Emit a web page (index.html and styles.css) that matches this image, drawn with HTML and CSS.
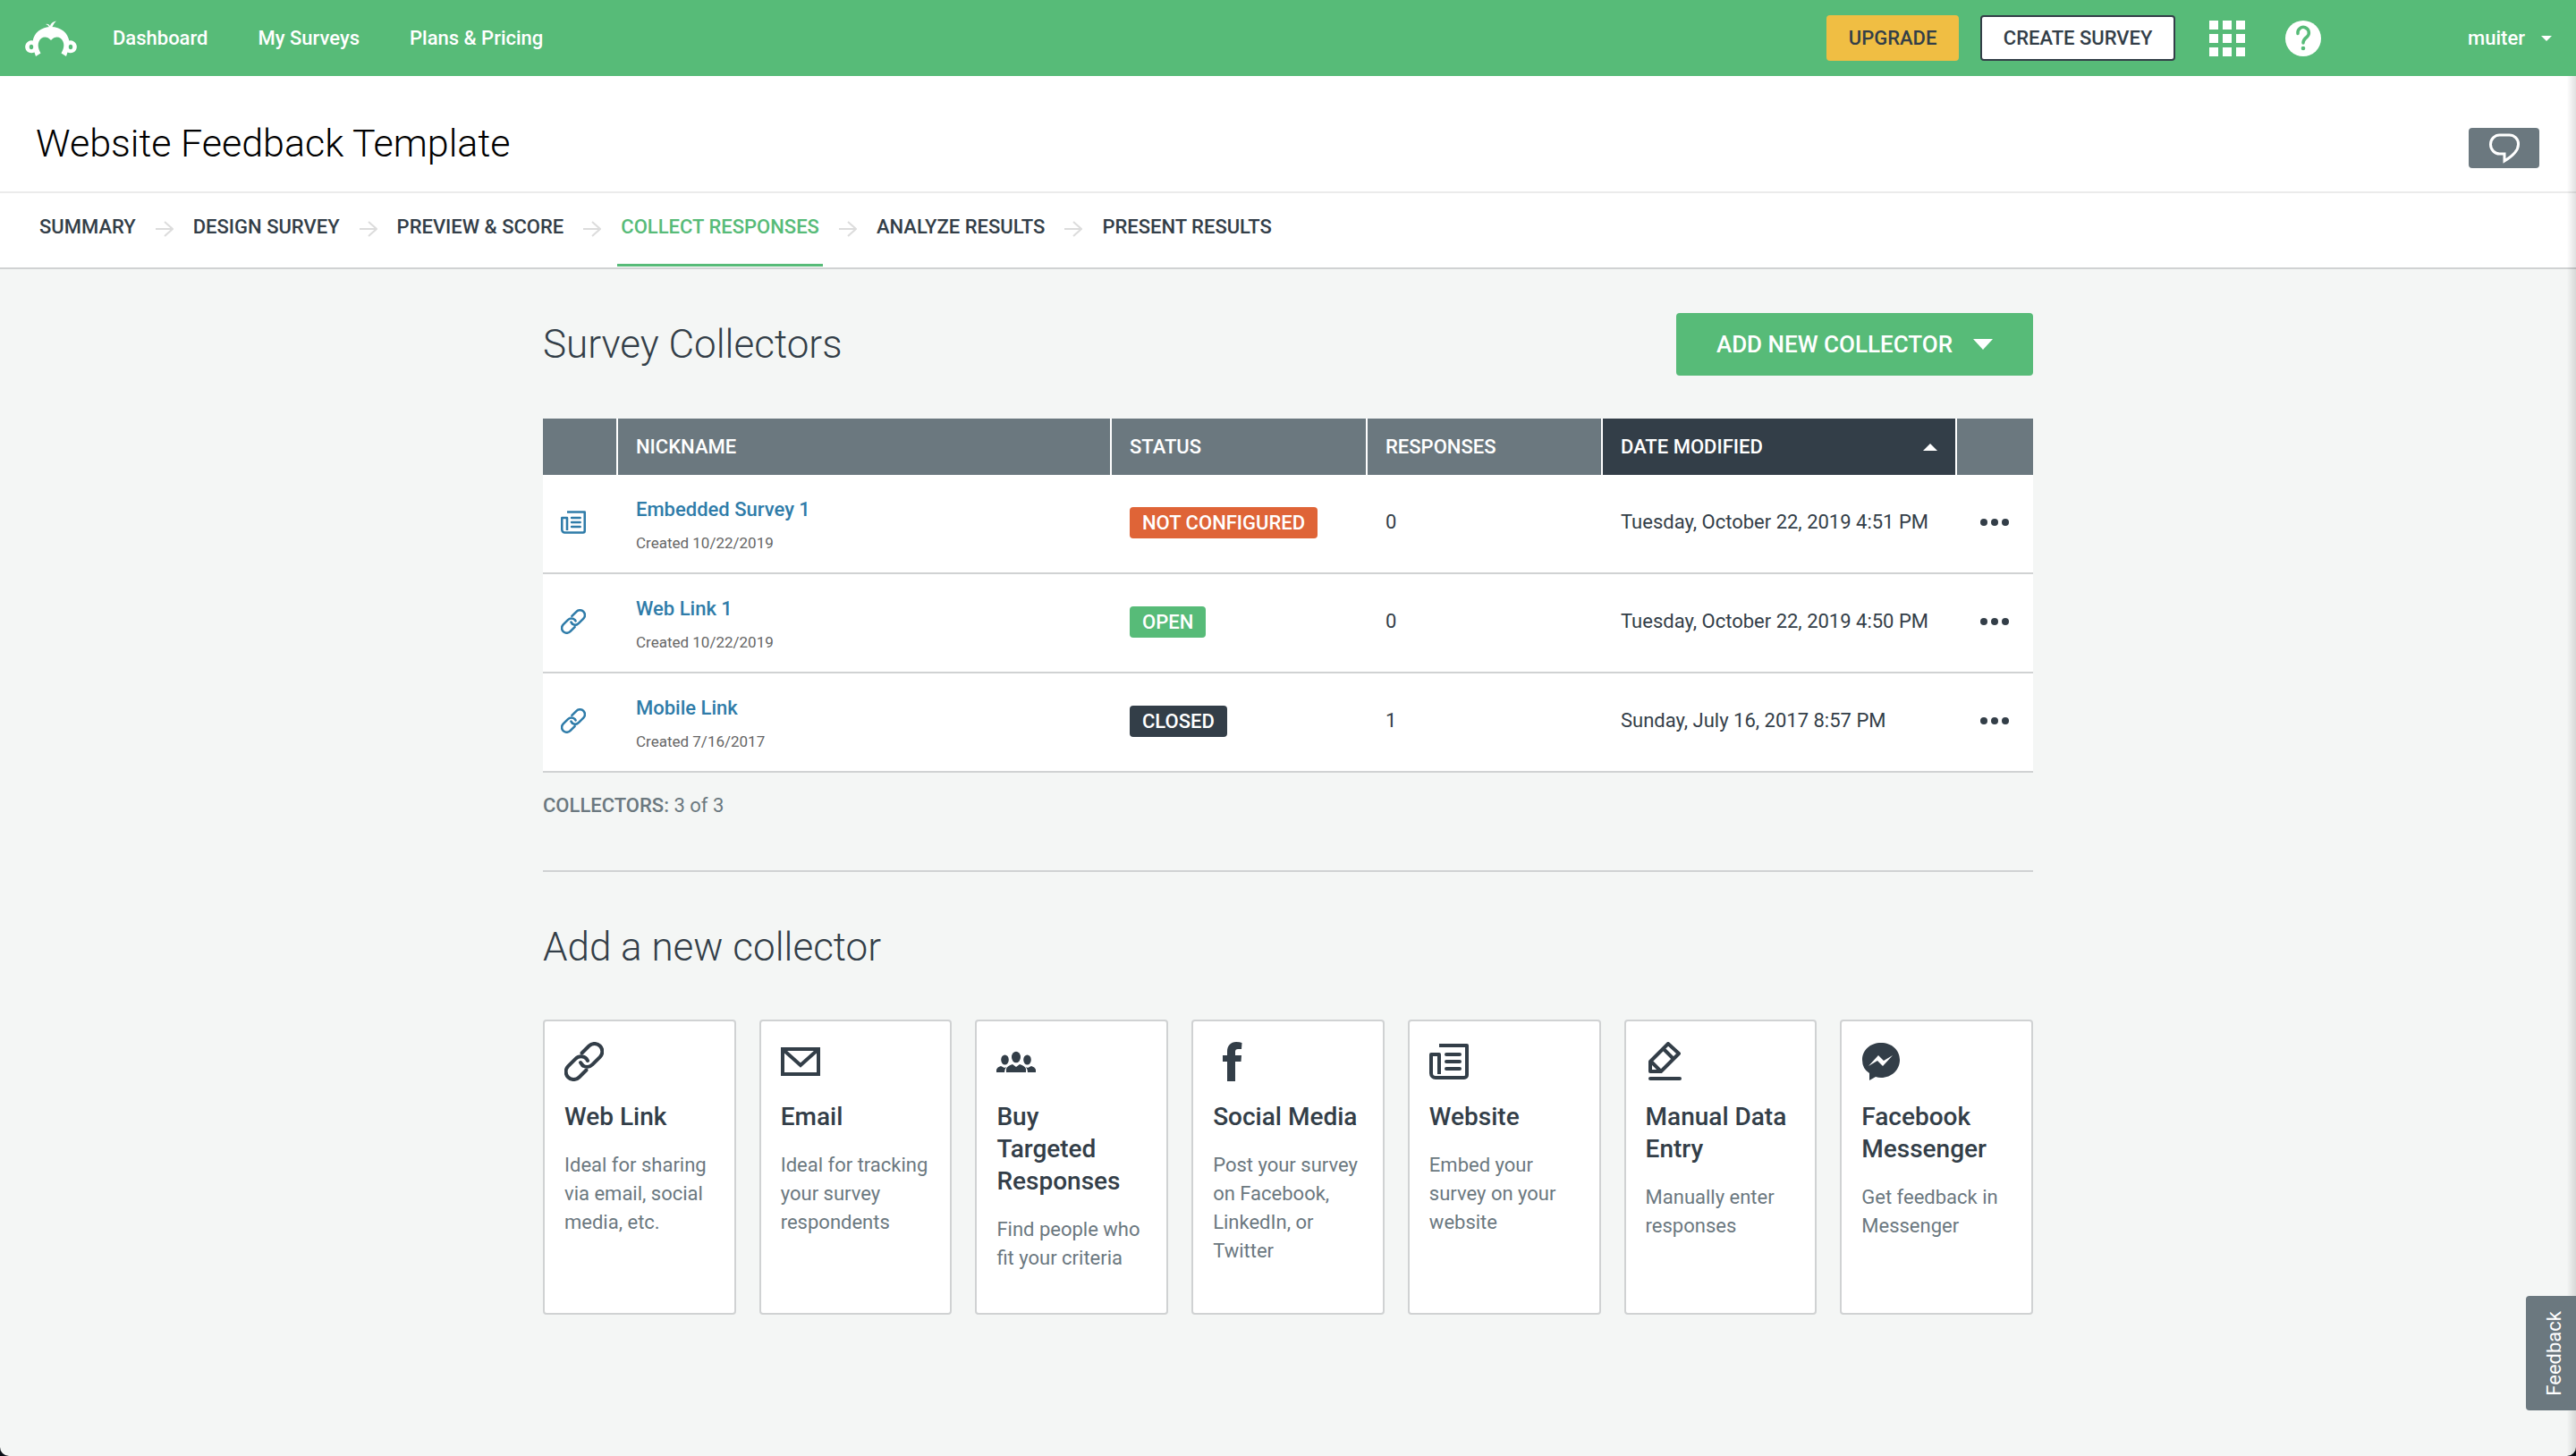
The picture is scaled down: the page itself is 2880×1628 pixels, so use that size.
FILE: index.html
```html
<!DOCTYPE html>
<html lang="en">
<head>
<meta charset="utf-8">
<title>Website Feedback Template</title>
<meta name="viewport" content="width=device-width, initial-scale=1">
<link rel="stylesheet" href="styles.css">
</head>
<body>
<svg class="sprite" aria-hidden="true">
  <symbol id="link" viewBox="0 0 44 44">
    <g fill="none" stroke="currentColor" stroke-width="4" stroke-linecap="round">
      <path d="M19.500 12.500L27.500 4.500a8.700 8.700 0 0 1 12.300 0a8.700 8.700 0 0 1 0 12.300L31.500 25.100a8.700 8.700 0 0 1 -11 1.200"/>
      <path d="M24.500 31.500L16.500 39.500a8.700 8.700 0 0 1 -12.300 0a8.700 8.700 0 0 1 0 -12.300L12.500 18.900a8.700 8.700 0 0 1 12.300 0L26 21"/>
      <path d="M18 23l2.500 3.300"/>
    </g>
  </symbol>
  <symbol id="news" viewBox="0 0 44 44">
    <g fill="none" stroke="currentColor" stroke-width="4" stroke-linejoin="round">
      <path d="M11 4h31v33a3 3 0 0 1 -3 3H7a5 5 0 0 1 -5 -5V14h9v22"/>
      <path d="M19 14h15M19 22h15M19 30h15" stroke-linecap="round"/>
    </g>
  </symbol>
  <symbol id="arrow" viewBox="0 0 20 18">
    <path d="M0 9h18M10 1l9 8l-9 8" fill="none" stroke="#dcdcdc" stroke-width="2"/>
  </symbol>
  <symbol id="dots" viewBox="0 0 32 8">
    <circle cx="4" cy="4" r="4"/><circle cx="16" cy="4" r="4"/><circle cx="28" cy="4" r="4"/>
  </symbol>
</svg>
<div class="page">
  <header class="topbar">
    <a class="logo" href="#" aria-label="Home">
      <svg width="58" height="40" viewBox="0 0 58 40" fill="#fff">
        <path fill-rule="evenodd" d="M29 7C18 7 10 14 8.700 22.500A7 7 0 1 0 10.500 35.500L12 40L17.500 36.500C14.500 31 14 27 15.500 23.500C18 18 24 16.500 29 22C34 16.500 40 18 42.500 23.500C44 27 43.500 31 40.500 36.500L46 40L47.500 35.500A7 7 0 1 0 49.300 22.500C48 14 40 7 29 7ZM7 26.800a2.200 2.700 0 1 1 0 5.400a2.200 2.700 0 1 1 0-5.400ZM51 26.800a2.200 2.700 0 1 1 0 5.400a2.200 2.700 0 1 1 0-5.400Z"/>
        <path d="M23 4q4 1 4 5h3q1-5 5-8.500q-6 1-7 5.500q-2-3-5-2Z"/>
      </svg>
    </a>
    <nav class="mainnav">
      <a href="#">Dashboard</a>
      <a href="#">My Surveys</a>
      <a href="#">Plans &amp; Pricing</a>
    </nav>
    <div class="tools">
      <button class="btn upgrade">UPGRADE</button>
      <button class="btn create">CREATE SURVEY</button>
      <button class="icon-btn apps" aria-label="Apps">
        <svg width="40" height="40" viewBox="0 0 40 40" fill="#fff"><path d="M0 0h10v10H0zM15 0h10v10H15zM30 0h10v10H30zM0 15h10v10H0zM15 15h10v10H15zM30 15h10v10H30zM0 30h10v10H0zM15 30h10v10H15zM30 30h10v10H30z"/></svg>
      </button>
      <button class="icon-btn help" aria-label="Help">
        <svg width="40" height="40" viewBox="0 0 40 40"><circle cx="20" cy="20" r="20" fill="#fff"/><path d="M14 14.500a6.200 6.200 0 1 1 10.500 3.500q-4.500 3.500-4.500 7" fill="none" stroke="#57bb78" stroke-width="3.500" stroke-linecap="round"/><circle cx="20" cy="31" r="2.300" fill="#57bb78"/></svg>
      </button>
      <button class="icon-btn user">muiter <svg width="12" height="6" viewBox="0 0 12 6"><path d="M0 0h12l-6 6z" fill="#fff"/></svg></button>
    </div>
  </header>

  <div class="titlebar">
    <h1>Website Feedback Template</h1>
    <button class="comment" aria-label="Comments">
      <svg width="36" height="34" viewBox="0 0 36 34"><path d="M13 2h10a10 10 0 0 1 10.500 10.500c0 8-8 14-15.500 18.500v-8h-5A10 10.500 0 0 1 2.500 12.500A10 10.500 0 0 1 13 2z" fill="none" stroke="#fff" stroke-width="3"/></svg>
    </button>
  </div>

  <nav class="steps">
    <a href="#">SUMMARY</a>
    <svg class="arrow"><use href="#arrow"/></svg>
    <a href="#">DESIGN SURVEY</a>
    <svg class="arrow"><use href="#arrow"/></svg>
    <a href="#">PREVIEW &amp; SCORE</a>
    <svg class="arrow"><use href="#arrow"/></svg>
    <a href="#" class="active">COLLECT RESPONSES</a>
    <svg class="arrow"><use href="#arrow"/></svg>
    <a href="#">ANALYZE RESULTS</a>
    <svg class="arrow"><use href="#arrow"/></svg>
    <a href="#">PRESENT RESULTS</a>
  </nav>

  <main class="content">
    <div class="head">
      <h2>Survey Collectors</h2>
      <button class="add">ADD NEW COLLECTOR <svg width="22" height="12" viewBox="0 0 22 12"><path d="M0 0h22l-11 12z" fill="#fff"/></svg></button>
    </div>

    <table class="collectors">
      <thead>
        <tr>
          <th class="c-icon"></th>
          <th class="c-name">NICKNAME</th>
          <th class="c-status">STATUS</th>
          <th class="c-resp">RESPONSES</th>
          <th class="c-date"><span class="sort">DATE MODIFIED <svg width="16" height="8" viewBox="0 0 16 8"><path d="M0 8h16l-8-8z" fill="#fff"/></svg></span></th>
          <th class="c-more"></th>
        </tr>
      </thead>
      <tbody>
        <tr>
          <td class="type"><svg><use href="#news"/></svg></td>
          <td class="name"><a href="#">Embedded Survey 1</a><small>Created 10/22/2019</small></td>
          <td><span class="pill warn">NOT CONFIGURED</span></td>
          <td>0</td>
          <td>Tuesday, October 22, 2019 4:51 PM</td>
          <td class="actions"><button class="more" aria-label="More"><svg><use href="#dots"/></svg></button></td>
        </tr>
        <tr>
          <td class="type"><svg><use href="#link"/></svg></td>
          <td class="name"><a href="#">Web Link 1</a><small>Created 10/22/2019</small></td>
          <td><span class="pill open">OPEN</span></td>
          <td>0</td>
          <td>Tuesday, October 22, 2019 4:50 PM</td>
          <td class="actions"><button class="more" aria-label="More"><svg><use href="#dots"/></svg></button></td>
        </tr>
        <tr>
          <td class="type"><svg><use href="#link"/></svg></td>
          <td class="name"><a href="#">Mobile Link</a><small>Created 7/16/2017</small></td>
          <td><span class="pill closed">CLOSED</span></td>
          <td>1</td>
          <td>Sunday, July 16, 2017 8:57 PM</td>
          <td class="actions"><button class="more" aria-label="More"><svg><use href="#dots"/></svg></button></td>
        </tr>
      </tbody>
    </table>
    <p class="count"><b>COLLECTORS:</b> 3 of 3</p>

    <h2 class="new">Add a new collector</h2>
    <div class="cards">
      <a class="card" href="#">
        <svg><use href="#link"/></svg>
        <h3>Web Link</h3>
        <p>Ideal for sharing via email, social media, etc.</p>
      </a>
      <a class="card" href="#">
        <svg viewBox="0 0 44 44"><path d="M2 8h40v28H2zM3 9l19 17L41 9" fill="none" stroke="currentColor" stroke-width="4"/></svg>
        <h3>Email</h3>
        <p>Ideal for tracking your survey respondents</p>
      </a>
      <a class="card" href="#">
        <svg viewBox="0 0 44 44" fill="currentColor"><ellipse cx="22" cy="17" rx="5" ry="6.300"/><ellipse cx="9.500" cy="20" rx="4.300" ry="5.500"/><ellipse cx="34.500" cy="20" rx="4.300" ry="5.500"/><path d="M11 34v-4q1-3 7-5l4 3l4-3q6 2 7 5v4zM0 34v-3q1-3 5-4l4 2l2-1q-2 3-2 6zM44 34v-3q-1-3-5-4l-4 2l-2-1q2 3 2 6z"/></svg>
        <h3>Buy<br>Targeted Responses</h3>
        <p>Find people who fit your criteria</p>
      </a>
      <a class="card" href="#">
        <svg viewBox="0 0 44 44" fill="currentColor"><path d="M16 44V22h-5v-7h5v-4C16 4 20 0 26 0q4 0 6.500 1l-.5 7h-4q-3 0-3 3v4h7l-.5 7H25v22z"/></svg>
        <h3>Social Media</h3>
        <p>Post your survey on Facebook, LinkedIn, or Twitter</p>
      </a>
      <a class="card" href="#">
        <svg><use href="#news"/></svg>
        <h3>Website</h3>
        <p>Embed your survey on your website</p>
      </a>
      <a class="card" href="#">
        <svg viewBox="0 0 44 44" fill="none" stroke="currentColor" stroke-width="4"><path d="M5 22L25 2L37 13L17 33H5zM20 8l11 11M6 22l11 11" stroke-linejoin="round"/><path d="M5 41h33" stroke-linecap="round"/></svg>
        <h3>Manual Data Entry</h3>
        <p>Manually enter responses</p>
      </a>
      <a class="card" href="#">
        <svg viewBox="0 0 44 44"><path d="M22 1C10 1 1 9 1 20q0 10 8 15v8l7-4q3 1 6 1c12 0 21-9 21-20S34 1 22 1z" fill="currentColor"/><path d="M8 27l11-12l6 6l10-6l-11 12l-6-6z" fill="#fff"/></svg>
        <h3>Facebook Messenger</h3>
        <p>Get feedback in Messenger</p>
      </a>
    </div>
  </main>
</div>
<button class="feedback">Feedback</button>
</body>
</html>
```
FILE: styles.css
```css
* { box-sizing: border-box; }
html { background: #0b0f17; }
body {
  margin: 0;
  color: #333e48;
  font: 22px/32px Roboto, "Liberation Sans", sans-serif;
}
a { color: inherit; text-decoration: none; }
button { font: inherit; color: inherit; border: 0; background: none; padding: 0; cursor: pointer; }
h1, h2, h3, p { margin: 0; }
svg { display: block; flex: none; }
.sprite { position: absolute; width: 0; height: 0; }
.page {
  min-height: 100vh;
  background: #f4f6f5;
  border-radius: 0 0 10px 10px;
  overflow: hidden;
}
.page::after {
  content: "";
  position: fixed;
  top: 85px;
  bottom: 0;
  right: 0;
  width: 10px;
  background: linear-gradient(to right, rgba(0, 0, 0, 0), rgba(0, 0, 0, .12));
}

.topbar {
  display: flex;
  align-items: center;
  height: 85px;
  padding: 0 27px 0 28px;
  background: #57bb78;
  color: #fff;
}
.mainnav { display: flex; gap: 56px; margin-left: 40px; font-weight: 500; }
.tools { display: flex; align-items: center; margin-left: auto; }
.btn {
  height: 51px;
  border-radius: 4px;
  color: #333e48;
  font-weight: 500;
}
.upgrade { width: 148px; background: #f0be43; }
.create { width: 218px; margin-left: 24px; background: #fff; border: 2px solid #333e48; }
.apps { margin-left: 38px; }
.help { margin-left: 45px; }
.user { display: flex; align-items: center; gap: 18px; margin-left: 164px; font-weight: 500; }

.titlebar {
  display: flex;
  align-items: center;
  justify-content: space-between;
  height: 131px;
  padding: 20px 41px 0 40px;
  background: #fff;
  border-bottom: 2px solid #ebebeb;
}
h1 { color: #000; font-size: 43px; line-height: 56px; font-weight: 300; }
.comment {
  display: grid;
  place-items: center;
  width: 79px;
  height: 45px;
  margin-top: 12px;
  border-radius: 4px;
  background: #6b787f;
}

.steps {
  display: flex;
  align-items: center;
  gap: 18px;
  height: 85px;
  padding: 0 40px;
  background: #fff;
  border-bottom: 2px solid #d0d2d3;
  font-weight: 500;
}
.steps a { padding: 21px 4px 25px; border-bottom: 3px solid transparent; }
.steps .active { color: #57bb78; border-color: #57bb78; }
.arrow { width: 20px; height: 18px; margin-bottom: 4px; }

.content { width: 58%; max-width: 1666px; margin: 0 auto; padding: 49px 0 156px; }
.head { display: flex; align-items: center; justify-content: space-between; margin-bottom: 48px; }
h2 { font-size: 44px; line-height: 56px; font-weight: 300; }
.add {
  display: flex;
  align-items: center;
  justify-content: center;
  gap: 23px;
  width: 399px;
  height: 70px;
  border-radius: 4px;
  background: #57bb78;
  color: #fff;
  font-size: 26px;
  font-weight: 500;
}

.collectors { width: 100%; border-collapse: separate; border-spacing: 0; table-layout: fixed; background: #fff; }
th {
  height: 63px;
  padding: 0 20px;
  background: #6b787f;
  color: #fff;
  font-weight: 500;
  text-align: left;
  border-right: 2px solid #fff;
}
th:last-child { border-right: 0; }
.c-icon { width: 84px; }
.c-status { width: 286px; }
.c-resp { width: 263px; }
.c-date { width: 396px; background: #333e48; }
.c-more { width: 85px; }
.sort { display: flex; align-items: center; justify-content: space-between; }
td { height: 111px; padding: 0 20px 3px; border-bottom: 2px solid #d0d2d3; white-space: nowrap; }
.name { padding: 4px 20px 0; }
.name a { display: block; color: #2f7ca9; font-weight: 500; }
.name small { display: block; margin-top: 6px; font-size: 17px; line-height: 30px; color: #666; }
.type { color: #2f7ca9; }
.type svg { width: 28px; height: 28px; }
.pill {
  display: inline-block;
  padding: 0 14px;
  border-radius: 4px;
  color: #fff;
  line-height: 35px;
  font-weight: 500;
}
.warn { background: #df6437; }
.open { background: #57bb78; }
.closed { background: #333e48; }
.actions { padding-left: 26px; }
.more { display: block; }
.more svg { width: 32px; height: 8px; fill: #333e48; }
.count {
  padding: 21px 0 56px;
  border-bottom: 2px solid #d0d2d3;
  color: #6b787f;
}
.count b { font-weight: 500; }
.new { padding: 56px 0 53px; }

.cards { display: grid; grid-template-columns: repeat(7, 1fr); gap: 26px; }
.card {
  min-height: 330px;
  padding: 23px 18px 23px 22px;
  border: 2px solid #d0d2d3;
  border-radius: 4px;
  background: #fff;
}
.card svg { width: 44px; height: 44px; }
.card h3 { margin: 22px 0 20px; font-size: 28px; line-height: 36px; font-weight: 500; }
.card p { color: #6b787f; }

.feedback {
  position: fixed;
  right: 0;
  bottom: 51px;
  width: 56px;
  height: 128px;
  padding-left: 8px;
  border-radius: 4px 0 0 4px;
  background: #6b787f;
  color: #fff;
  writing-mode: sideways-lr;
}
```
